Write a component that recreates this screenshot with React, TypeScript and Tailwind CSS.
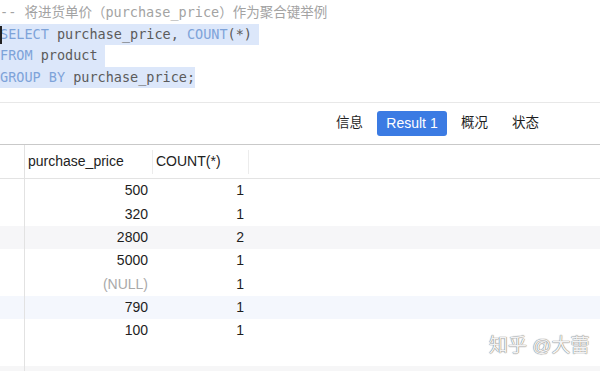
const rows = [
  { price: '500', count: '1' },
  { price: '320', count: '1' },
  { price: '2800', count: '2' },
  { price: '5000', count: '1' },
  { price: '(NULL)', count: '1', isNull: true },
  { price: '790', count: '1' },
  { price: '100', count: '1' },
  { price: '', count: '' },
  { price: '', count: '' },
];

const stripe = ['', '', 'bg-[#f6f6f8]', '', '', 'bg-[#f4f7fd]', '', '', 'bg-[#f6f6f7]'];

const mono = "font-['DejaVu_Sans_Mono','Liberation_Mono','Noto_Sans_CJK_SC',monospace]";

export default function App() {
  return (
    <div className="relative w-[600px] h-[371px] overflow-hidden bg-white font-['Liberation_Sans','Noto_Sans_CJK_SC',sans-serif]">
      {/* sql editor */}
      <div className={`h-[102px] pt-[2px] text-[13.5px] leading-[21.5px] ${mono}`}>
        <div className="whitespace-pre text-[#a3a3a3]">
          -- 将进货单价（purchase_price）作为聚合键举例
        </div>
        <div className="relative w-[259px] whitespace-pre bg-[#dce7fa]">
          <span className="absolute left-0 top-[2px] h-[18px] w-[2px] bg-[#222]" />
          <span className="text-[#7ea3d9]">SELECT</span>
          <span className="text-[#5b5b5b]"> purchase_price, </span>
          <span className="text-[#7ea3d9]">COUNT</span>
          <span className="text-[#5b5b5b]">(*)</span>
        </div>
        <div className="w-[105px] whitespace-pre bg-[#dce7fa]">
          <span className="text-[#7ea3d9]">FROM</span>
          <span className="text-[#5b5b5b]"> product</span>
        </div>
        <div className="w-[195px] whitespace-pre bg-[#dce7fa]">
          <span className="text-[#7ea3d9]">GROUP BY</span>
          <span className="text-[#5b5b5b]"> purchase_price;</span>
        </div>
      </div>

      {/* tab bar */}
      <div className="flex h-[43px] items-center border-t border-b border-t-[#e8e8e8] border-b-[#c9c9c9] text-[13.5px] text-[#1f1f1f]">
        <div className="ml-[324px] px-3">信息</div>
        <div className="ml-[2px] flex h-[25px] w-[70px] items-center justify-center rounded-[3px] bg-[#3b7be3] text-[14px] text-white">
          Result 1
        </div>
        <div className="ml-[2px] px-3">概况</div>
        <div className="px-3">状态</div>
      </div>

      {/* result grid */}
      <div className="relative">
        <div className="absolute left-[24px] top-0 h-[240px] w-px bg-[#e2e2e2]" />
        <div className="flex h-[34px] items-center border-b border-[#e3e3e3] text-[14px] text-[#222]">
          <div className="w-[25px]" />
          <div className="flex h-full w-[127px] items-center pl-[3px]">purchase_price</div>
          <div className="h-[24px] w-px bg-[#ececec]" />
          <div className="flex h-full w-[95px] items-center pl-[3px]">COUNT(*)</div>
          <div className="h-[24px] w-px bg-[#ececec]" />
        </div>
        {rows.map((r, i) => (
          <div key={i} className={`flex h-[23.35px] items-center text-[14px] text-[#1e1e1e] ${stripe[i]}`}>
            <div className="w-[25px]" />
            <div className={`w-[123px] text-right ${r.isNull ? 'text-[#a9a9a9]' : ''}`}>{r.price}</div>
            <div className="w-[96px] text-right">{r.count}</div>
          </div>
        ))}
      </div>

      {/* watermark */}
      <div className="absolute left-[489px] top-[332px] whitespace-nowrap text-[19px] text-[#f2f2f2] [text-shadow:0_0_1px_#777,0_0_1px_#777]">
        知乎 @大蕾
      </div>
    </div>
  );
}
